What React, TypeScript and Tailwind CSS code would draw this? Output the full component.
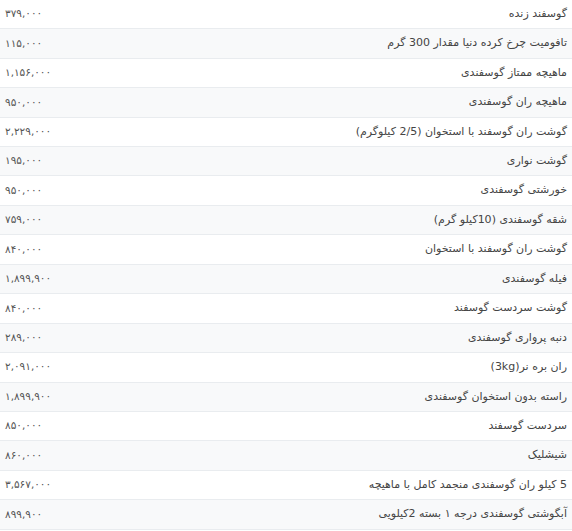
import React from 'react';

const items: [string, string][] = [
  ['گوسفند زنده', '۳۷۹,۰۰۰'],
  ['تافومیت چرخ کرده دنیا مقدار 300 گرم', '۱۱۵,۰۰۰'],
  ['ماهیچه ممتاز گوسفندی', '۱,۱۵۶,۰۰۰'],
  ['ماهیچه ران گوسفندی', '۹۵۰,۰۰۰'],
  ['گوشت ران گوسفند با استخوان (2/5 کیلوگرم)', '۲,۲۲۹,۰۰۰'],
  ['گوشت نواری', '۱۹۵,۰۰۰'],
  ['خورشتی گوسفندی', '۹۵۰,۰۰۰'],
  ['شقه گوسفندی (10کیلو گرم)', '۷۵۹,۰۰۰'],
  ['گوشت ران گوسفند با استخوان', '۸۴۰,۰۰۰'],
  ['فیله گوسفندی', '۱,۸۹۹,۹۰۰'],
  ['گوشت سردست گوسفند', '۸۴۰,۰۰۰'],
  ['دنبه پرواری گوسفندی', '۲۸۹,۰۰۰'],
  ['ران بره نر(3kg)', '۲,۰۹۱,۰۰۰'],
  ['راسته بدون استخوان گوسفندی', '۱,۸۹۹,۹۰۰'],
  ['سردست گوسفند', '۸۵۰,۰۰۰'],
  ['شیشلیک', '۸۶۰,۰۰۰'],
  ['5 کیلو ران گوسفندی منجمد کامل با ماهیچه', '۳,۵۶۷,۰۰۰'],
  ['آبگوشتی گوسفندی درجه ۱ بسته 2کیلویی', '۸۹۹,۹۰۰'],
];

export default function App() {
  return (
    <div
      dir="rtl"
      className="w-[572px] h-[531px] overflow-hidden bg-white text-[11px] text-[#444]"
      style={{ fontFamily: '"DejaVu Sans", sans-serif' }}
    >
      {items.map(([name, price], i) => (
        <div
          key={i}
          className={`flex items-center justify-between px-[5px] ${
            i === 0 ? 'h-[28.3px]' : 'h-[29.44px] border-t border-[#e9ecef]'
          } ${i % 2 === 1 ? 'bg-[#f8f9fa]' : 'bg-white'}`}
        >
          <span>{name}</span>
          <span className="text-[#555] text-[10.5px]">{price}</span>
        </div>
      ))}
      <div className="h-[29.44px] border-t border-[#e9ecef] bg-white"></div>
    </div>
  );
}
